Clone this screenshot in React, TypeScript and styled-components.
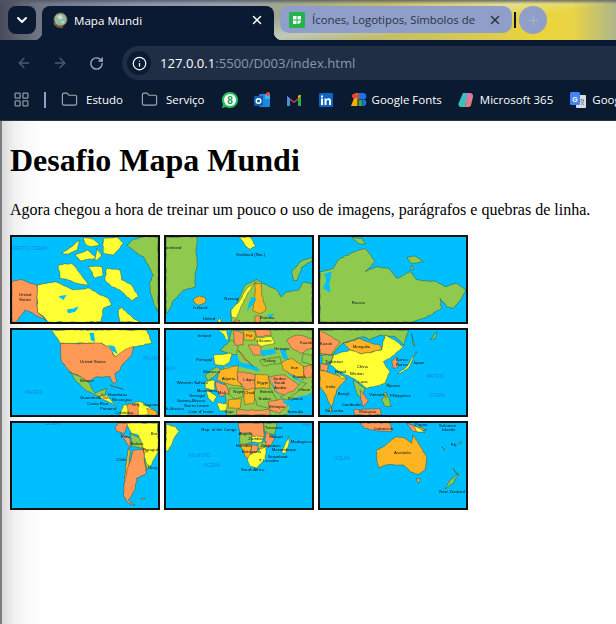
import React from "react";
import styled, { createGlobalStyle } from "styled-components";
import { ArrowLeft, ArrowRight, RotateCw, Info, X, ChevronDown, Folder, LayoutGrid, Plus } from "lucide-react";

const Global = createGlobalStyle`
  html, body { margin: 0; padding: 0; background: #fff; }
  body { width: 616px; height: 624px; overflow: hidden; font-family: "Liberation Serif", serif; }
`;

const NAVY = "#0a1a33";
const TAB = "#8f9fc9";

const Shell = styled.div`width: 616px; height: 624px; display: flex; flex-direction: column; overflow: hidden;`;
const TabStrip = styled.div`
  height: 40px; flex: none; display: flex; align-items: flex-start; padding: 6px 0 0 8px; box-sizing: border-box;
  background:
    linear-gradient(180deg, rgba(80,85,100,.8) 0, rgba(80,85,100,0) 4px),
    linear-gradient(172deg, transparent 45%, rgba(225,235,225,.5) 60%, transparent 72%),
    linear-gradient(90deg, #474b58 0, #6f7484 6%, #8b93ad 22%, #98a0ab 38%, #a3aa88 48%, #bcb96f 58%, #cfc55c 72%, #ecd53a 88%, #e8d445 93%, #aeb58c 100%);
`;
const MenuButton = styled.div`
  width: 28px; height: 28px; border-radius: 8px; background: ${NAVY}; color: #fff; display: flex; align-items: center; justify-content: center; flex: none;
`;
const ActiveTab = styled.div`
  position: relative; margin-left: 6px; width: 232px; height: 34px; flex: none; box-sizing: border-box; padding: 0 10px 6px 10px;
  background: ${NAVY}; border-radius: 8px 8px 0 0; color: #fff; display: flex; align-items: center;
  font: 11.6px "Open Sans", sans-serif;
  &::before, &::after { content: ""; position: absolute; bottom: 0; width: 8px; height: 8px; }
  &::before { left: -8px; background: radial-gradient(circle at 0 0, transparent 8px, ${NAVY} 8.5px); }
  &::after { right: -8px; background: radial-gradient(circle at 100% 0, transparent 8px, ${NAVY} 8.5px); }
`;
const InactiveTab = styled.div`
  margin-left: 6px; width: 232px; height: 27px; flex: none; box-sizing: border-box; padding: 0 10px 0 9px;
  background: ${TAB}; border-radius: 9px; color: #2d3444; display: flex; align-items: center;
  font: 11.4px "Open Sans", sans-serif;
`;
const TabTitle = styled.span<{ $gap: number }>`flex: 1; margin-left: ${(p) => p.$gap}px; white-space: nowrap; overflow: hidden;`;
const TabDivider = styled.div`width: 2px; height: 16px; margin: 6px 3px 0 2px; background: #0c1626; flex: none;`;
const NewTab = styled.div`width: 28px; height: 28px; border-radius: 50%; background: ${TAB}; color: #a3afd0; display: flex; align-items: center; justify-content: center; flex: none;`;

const Toolbar = styled.div`height: 40px; flex: none; background: ${NAVY}; display: flex; align-items: flex-end; box-sizing: border-box; color: #5e6a80;`;
const NavButton = styled.div<{ $color?: string }>`
  width: 36px; height: 34px; flex: none; display: flex; align-items: center; justify-content: center; color: ${(p) => p.$color || "#4d5a70"};
`;
const NavGroup = styled.div`display: flex; padding-left: 6px; width: 122px; box-sizing: border-box; flex: none; gap: 0;`;
const Omnibox = styled.div`
  flex: 1; height: 34px; background: #202e45; border-radius: 17px 0 0 17px; display: flex; align-items: center; padding-left: 5px;
  font: 13.1px "Open Sans", sans-serif; color: #8c96a8; white-space: nowrap;
`;
const InfoChip = styled.div`width: 24px; height: 24px; border-radius: 50%; background: ${NAVY}; color: #fff; display: flex; align-items: center; justify-content: center; margin-right: 9px; flex: none;`;
const Host = styled.span`color: #fff;`;

const Bookmarks = styled.div`
  height: 41px; flex: none; background: #0a1a30; border-bottom: 1px solid #2b3447; box-sizing: border-box; display: flex; align-items: center; padding: 0 0 1px 13px;
  color: #fff; font: 11.5px "Open Sans", sans-serif; white-space: nowrap; overflow: hidden;
`;
const Separator = styled.div`width: 2px; height: 16px; background: #8ea2c6; margin: 0 15px 0 14px; flex: none;`;
const BookmarkItem = styled.div<{ $gap?: number; $next?: number }>`
  display: flex; align-items: center; gap: ${(p) => p.$gap ?? 6}px; margin-right: ${(p) => p.$next ?? 16}px; flex: none;
  & > svg { flex: none; }
`;

const Page = styled.main`
  flex: 1; padding: 0 0 0 10px; display: flow-root;
  background: linear-gradient(90deg, #7d7d7d 0, #7d7d7d 2px, #d9d9d9 2px, #f0f0f0 14px, #fafafa 28px, #fff 44px);
`;
const Heading = styled.h1`font: bold 32px/37px "Liberation Serif", serif; margin: 21.44px 0; color: #000;`;
const Lead = styled.p`font: 16px/18px "Liberation Serif", serif; margin: 16px 0; color: #000;`;
const MapGrid = styled.div`display: grid; grid-template-columns: repeat(3, 150px); grid-auto-rows: 89px; gap: 4px;`;
const TileFrame = styled.svg`display: block; width: 150px; height: 89px; box-sizing: border-box; border: 2px solid #111; background: #00bfff; filter: blur(.3px);`;

const G = "#8fca4e", Y = "#ffff33", O = "#ff9955", A = "#ffb522", B = "#00bfff";
type Shape = [string, string];
type Label = [string, number, number, boolean?];
type Tile = { box: string; shapes: Shape[]; labels: Label[] };

/* Roughens the straight edges of a shape so that they read as coastlines. */
const coast = (points: string, seed: number) => {
  const pts = points.split(" ").map((p) => p.split(",").map(Number));
  let s = seed * 9301 + 49297;
  const rnd = () => { s = (s * 9301 + 49297) % 233280; return s / 233280 - 0.5; };
  const out: string[] = [];
  pts.forEach((p, i) => {
    const q = pts[(i + 1) % pts.length];
    const len = Math.hypot(q[0] - p[0], q[1] - p[1]);
    const steps = Math.max(1, Math.round(len / 9));
    for (let k = 0; k < steps; k++) {
      const t = k / steps;
      const amp = k === 0 ? 0 : 3.4;
      out.push(`${(p[0] + (q[0] - p[0]) * t + rnd() * amp).toFixed(1)},${(p[1] + (q[1] - p[1]) * t + rnd() * amp).toFixed(1)}`);
    }
  });
  return out.join(" ");
};

const tiles: Tile[] = [
  { box: "36 21 438 255", shapes: [
    [G, "380,45 400,28 430,21 474,21 474,245 462,225 452,190 448,160 460,135 445,105 430,80 405,65"],
    [Y, "112,165 165,155 200,170 220,180 270,175 300,195 325,205 335,225 310,235 303,276 145,276 125,255 112,245"],
    [Y, "355,240 365,232 395,260 420,276 360,276"],
    [Y, "320,115 360,120 365,150 395,165 415,200 395,212 360,180 335,170 315,150"],
    [Y, "175,105 215,100 240,130 265,165 230,160 205,150 180,145"],
    [Y, "310,25 350,22 370,40 340,75 310,70"],
    [Y, "250,22 280,28 300,45 272,50 255,40"], [Y, "185,70 215,50 240,30 232,60 205,72"],
    [Y, "265,110 305,110 310,135 285,145"],
    [Y, "225,75 262,60 290,85 240,92"], [Y, "290,55 305,78 285,92"],
    [O, "36,155 60,148 110,165 112,245 140,272 125,265 100,250 75,240 50,276 36,276"],
    [B, "175,200 200,195 190,210"], [B, "200,240 235,230 225,245 205,250"],
  ], labels: [["ARCTIC OCEAN", 37, 60, true], ["United", 57, 199], ["States", 57, 213]] },
  { box: "18 15 438 255", shapes: [
    [G, "18,15 112,15 108,60 112,95 105,130 105,165 70,175 40,205 25,240 18,245"],
    [A, "100,200 118,192 138,198 135,212 115,220 102,210"],
    [Y, "238,15 270,15 288,42 270,52 255,40"],
    [G, "456,155 430,150 415,175 380,180 365,195 345,170 310,155 290,142 255,160 240,195 225,225 213,235 215,270 456,270"],
    [G, "400,145 395,120 420,90 456,75 456,85 425,105 412,145"],
    [A, "285,155 305,155 305,190 318,235 300,245 278,235 285,205"],
    [Y, "213,235 240,205 260,170 290,148 275,165 260,190 245,220 230,258 215,255"],
    [B, "275,195 290,200 272,225 262,240 268,210"], [B, "320,250 345,245 330,258"],
    [Y, "172,270 178,258 185,270"], [O, "285,252 302,252 300,270 285,270"], [O, "225,264 240,266 235,270 225,270"],
  ], labels: [["eenland", 18, 52], ["Svalbard (Nor.)", 228, 73], ["Iceland", 100, 231], ["Norway", 193, 203], ["Estonia", 300, 260], ["United", 128, 264]] },
  { box: "240 21 438 255", shapes: [
    [G, "240,125 280,115 300,85 355,60 375,55 405,95 375,125 410,110 445,115 470,145 510,125 530,150 590,155 615,170 650,160 678,180 665,205 640,235 620,230 600,205 605,235 575,255 550,265 515,276 240,276"],
    [G, "500,82 525,78 550,95 515,100"], [G, "336,22 365,25 378,42 355,40"], [G, "515,105 522,118 510,120"],
    [B, "252,132 275,125 268,160 272,190 250,175 258,150"],
  ], labels: [["Russia", 335, 222]] },
  { box: "36 300 438 255", shapes: [
    [Y, "155,300 440,300 455,340 400,350 385,375 345,380 330,355 305,340 180,340"],
    [O, "180,340 305,340 330,355 345,380 385,355 400,350 395,375 370,400 360,420 345,430 350,455 340,460 330,440 290,440 265,455 240,440 210,425 185,395"],
    [G, "208,425 240,440 265,455 285,490 320,475 315,495 295,500 255,480 225,450"],
    [O, "330,465 370,478 345,472"], [Y, "295,500 320,495 350,535 335,520"], [O, "305,490 325,505 310,505"],
    [Y, "360,555 370,525 420,515 470,545 474,555"], [O, "380,525 415,520 415,555 385,555"], [A, "440,535 470,545 470,555 445,555"],
    [B, "268,310 282,308 285,335 272,330"], [B, "320,345 345,350 352,372 335,362"],
  ], labels: [["United States", 240, 399], ["Mexico", 240, 455], ["PACIFIC", 75, 491, true], ["ATLANT", 428, 389, true], ["Guatemala", 240, 508], ["Honduras", 325, 499], ["Nicaragua", 336, 513], ["Costa Rica", 262, 526], ["Panama", 300, 539], ["Colombia", 345, 552], ["Guyana", 430, 527], ["Ven.", 395, 529]] },
  { box: "18 15 438 255", shapes: [
    [G, "215,15 456,15 456,270 200,270 190,120"],
    [G, "150,30 168,20 170,38 155,42"], [Y, "175,15 200,15 205,45 180,60 195,35"],
    [B, "165,60 215,65 230,85 240,110 290,125 300,140 235,125 195,125 140,145 135,270 18,270 18,15 175,15 205,50 180,75"],
    [G, "180,75 215,45 235,65 228,90 205,85"],
    [Y, "160,90 215,85 210,110 190,122 165,118"],
    [O, "220,15 250,25 250,60 225,60"], [A, "250,15 285,20 285,45 252,45"], [O, "285,15 330,15 335,30 290,35"],
    [Y, "285,40 335,35 345,55 300,65"], [O, "235,75 265,110 280,125 255,105"], [O, "265,60 300,60 305,90 280,90"],
    [B, "300,78 340,72 350,85 310,95"], [G, "300,105 360,95 365,115 310,122"], [O, "380,45 410,30 456,40 456,70 420,85 395,70"],
    [B, "360,75 375,70 385,105 368,100"], [A, "365,110 395,100 430,125 430,165 400,150 370,135"], [G, "430,85 456,90 456,120 425,110"], [O, "430,125 456,120 456,155 435,160"],
    [G, "135,150 170,125 185,135 145,170"], [A, "180,135 235,120 232,165 245,185 215,180 170,165"], [O, "232,140 285,148 285,195 260,195 232,165"],
    [A, "285,148 325,150 330,190 285,190"], [G, "285,190 330,190 350,225 325,250 290,240 282,210"], [A, "250,195 285,190 282,235 255,240"],
    [G, "208,190 250,190 250,215 225,222 205,208"], [O, "165,170 200,180 208,205 180,215 170,195"], [Y, "135,170 165,165 165,195 135,190"],
    [Y, "140,195 170,215 160,235 145,220"], [A, "205,225 245,222 240,250 205,250"], [O, "325,230 365,222 385,240 360,265 330,255"],
    [O, "230,255 330,255 330,270 230,270"], [Y, "170,235 200,235 200,258 180,258"], [O, "325,155 375,150 420,185 385,215 345,200"], [G, "360,215 405,195 425,170 440,175 420,195 380,225"],
    [B, "330,150 345,195 375,230 385,232 360,215 340,185"], [B, "375,135 405,165 430,170 400,155"], [B, "365,230 456,205 456,270 380,270 390,245"],
  ], labels: [["Ireland", 113, 35], ["Portugal", 108, 107], ["Morocco", 130, 143], ["Western Sahara", 50, 177], ["Mauritania", 110, 202], ["Mali", 173, 207], ["Senegal", 88, 215], ["Guinea-Bissau", 50, 232], ["Sierra Leone", 72, 246], ["h-Guiana", 18, 256], ["Cote d' Ivoire", 85, 265], ["Togo", 193, 265], ["Algeria", 185, 165], ["Libya", 250, 167], ["Egypt", 292, 178], ["Niger", 220, 203], ["Chad", 252, 207], ["Sudan", 295, 225], ["Eritrea", 300, 203], ["Saudi", 342, 177], ["Arabia", 342, 191], ["Jordan", 338, 164], ["Iran", 392, 133], ["Kuwait", 398, 160], ["Turkey", 308, 112], ["Djibouti", 385, 225], ["Oman", 415, 198], ["Somalia", 382, 264], ["Ethiopia", 328, 248], ["Pol", 258, 37], ["Ukraine", 290, 50], ["Georgia", 342, 76], ["Kazak", 420, 58], ["C", 18, 105, true], ["EAN", 18, 135, true]] },
  { box: "240 300 438 255", shapes: [
    [G, "240,300 505,300 492,345 465,320 420,315 390,330 370,320 310,338 275,375 240,375"],
    [O, "240,300 300,335 275,375 240,370"],
    [A, "310,340 360,325 395,340 420,345 425,360 365,372 330,360"],
    [Y, "280,375 330,360 365,372 425,360 435,315 470,335 490,350 450,385 430,395 450,425 435,460 380,475 340,445 300,425 270,405"],
    [G, "245,375 280,375 270,400 245,405"], [O, "240,400 265,405 262,425 240,420"],
    [A, "240,420 290,435 320,445 290,480 275,535 255,490 240,470"],
    [Y, "285,425 320,445 305,445"], [O, "455,395 470,380 475,410 460,415"],
    [Y, "472,430 500,410 530,365 515,395 505,415 480,430"], [G, "340,450 375,475 365,510 350,490"],
    [O, "360,480 385,510 370,530 362,505"], [G, "425,510 440,490 455,530 435,530"], [O, "340,540 420,535 425,555 345,555"],
    [A, "440,462 445,460 440,470"], [A, "430,490 440,488 438,505"], [G, "515,310 525,350 520,345"], [G, "570,330 590,305 585,325"], [A, "265,535 275,535 272,547"],
  ], labels: [["Mongolia", 338, 353], ["China", 350, 415], ["Korea", 468, 393], ["Korea", 468, 408], ["Japan", 518, 401], ["Taiwan", 440, 470], ["Philippines", 450, 502], ["Vietnam", 387, 499], ["Laos", 355, 458], ["Bhutan", 330, 434], ["Nepal", 285, 430], ["India", 258, 474], ["Sri Lanka", 255, 545], ["Malaysia", 358, 549], ["Cambodia", 305, 528], ["Bangl.", 293, 494], ["Kazak", 240, 346], ["Tajikistan", 255, 400], ["PACIFIC", 560, 443, true], ["OCEAN", 566, 500, true]] },
  { box: "36 24 438 255", shapes: [
    [O, "345,35 355,24 385,24 375,55 350,50"],
    [Y, "380,24 474,24 474,110 455,150 440,160 430,105 415,60 395,55"],
    [O, "360,55 390,70 390,100 375,75"], [G, "390,55 420,70 430,100 395,95"], [A, "425,97 445,110 430,115"],
    [A, "385,100 392,110 380,190 374,190"],
    [O, "400,105 430,105 440,175 410,190 405,225 385,255 405,272 385,265 370,240 375,190"],
    [G, "435,140 450,155 440,165"], [A, "423,250 435,250 430,255"],
  ], labels: [["OCEAN", 135, 29, true], ["Bra", 452, 60], ["Bolivia", 392, 89], ["Peru", 362, 68], ["Paraguay", 428, 108], ["Chile", 349, 138], ["Urug", 444, 161]] },
  { box: "18 15 438 255", shapes: [
    [Y, "18,18 45,25 57,40 40,65 25,98 18,100"],
    [O, "235,15 310,15 315,60 265,55 240,45"], [G, "310,15 350,15 345,50 315,45"],
    [G, "238,45 275,45 275,75 240,80"], [Y, "275,55 310,55 305,75 275,72"], [O, "318,40 345,60 325,90 315,80"], [G, "295,75 320,72 310,95 290,90"],
    [A, "240,80 275,80 270,125 255,115"], [O, "275,80 295,85 290,105 270,105"], [Y, "270,110 320,85 315,125 290,150 270,145 262,125"],
    [Y, "365,105 385,55 388,70 378,105"], [O, "298,124 304,124 301,130"],
  ], labels: [["IND", 428, 24, true], ["Rep. of the Congo", 124, 39], ["Angola", 236, 52], ["Zambia", 265, 66], ["Tanzania", 315, 33], ["Namibia", 227, 87], ["Zimbabwe", 302, 86], ["Botswana", 246, 104], ["Malawi", 328, 60], ["Mozambique", 335, 100], ["Swaziland", 323, 120], ["Lesotho", 310, 133], ["South Africa", 243, 158], ["Madagascar", 392, 75], ["ATLANTIC", 84, 117, true], ["OCEAN", 131, 148, true]] },
  { box: "240 24 438 255", shapes: [
    [A, "408,105 430,95 470,65 495,70 515,85 518,60 560,125 555,165 535,178 510,170 490,150 450,148 415,158"],
    [A, "528,190 542,192 535,205"], [G, "615,222 630,195 655,175 640,205"], [G, "640,160 655,180 645,172"],
    [O, "360,24 450,24 455,50 400,45 375,40"], [O, "500,24 560,45 520,50"], [Y, "520,30 555,52 530,50"], [G, "655,85 665,80 660,88"], [O, "605,95 615,105 610,103"],
  ], labels: [["Indonesia", 403, 44], ["Papua", 525, 32], ["Solomon", 597, 36], ["Islands", 605, 49], ["Fiji", 633, 93], ["Australia", 462, 118], ["OCEAN", 280, 136, true], ["New Zealand", 598, 234]] },
];

const MapTile = ({ tile }: { tile: Tile }) => (
  <TileFrame viewBox={tile.box} preserveAspectRatio="none">
    {tile.shapes.map(([fill, points], i) => (
      <polygon key={i} points={coast(points, i + 1)} fill={fill} stroke={fill === B ? "none" : "#2a3a25"} strokeWidth="1.2" strokeLinejoin="round" />
    ))}
    {tile.labels.map(([text, x, y, ocean], i) => (
      <text key={i} x={x} y={y} fontFamily="'Liberation Sans', sans-serif" fontSize={ocean ? 14 : 13} fill={ocean ? "#0d84e6" : "#08141c"}>{text}</text>
    ))}
  </TileFrame>
);

const Globe = () => (
  <svg width="16" height="16" viewBox="0 0 16 16">
    <circle cx="8.5" cy="7.5" r="6.5" fill="#8fb9a8" stroke="#7a6a3a" strokeWidth="1" />
    <path d="M5 4l4-1 2 3-3 2zM9 9l3 0-1 3z" fill="#cfe0c0" />
    <path d="M2 11c1 3 5 4.500 9 4" stroke="#a0672a" strokeWidth="1.500" fill="none" />
  </svg>
);
const Sheet = () => (
  <svg width="16" height="16" viewBox="0 0 16 16">
    <rect width="16" height="16" rx="2" fill="#22b34b" />
    <path d="M4 4h3.500v3.500H4zM8.500 4H12v3.500H8.500zM4 8.500h3.500V12H4zM8.500 8.500H12c0 2-1.500 3.500-3.500 3.500z" fill="#fff" />
  </svg>
);
const WhatsApp = () => (
  <svg width="16" height="16" viewBox="0 0 16 16">
    <path d="M8 0a8 8 0 0 1 0 16 8 8 0 0 1-4-1L0 16l1.100-3.800A8 8 0 0 1 8 0z" fill="#22c35e" />
    <circle cx="8" cy="8" r="6" fill="#fff" />
    <text x="8" y="11.500" textAnchor="middle" fontFamily="'Liberation Sans', sans-serif" fontWeight="bold" fontSize="10" fill="#179c48">8</text>
  </svg>
);
const Outlook = () => (
  <svg width="16" height="16" viewBox="0 0 16 16">
    <rect x="5" y="2" width="11" height="13" rx="1" fill="#1e88d8" />
    <rect x="11" y="2" width="5" height="5" fill="#37b6f0" />
    <circle cx="14" cy="2" r="2" fill="#e5484d" />
    <rect y="4" width="9" height="10" rx="1" fill="#0f5fb0" />
    <circle cx="4.500" cy="9" r="2.300" fill="none" stroke="#fff" strokeWidth="1.400" />
  </svg>
);
const Gmail = () => (
  <svg width="16" height="14" viewBox="0 0 16 14">
    <path d="M1 13V3l7 5.500L15 3v10h-3V7L8 10 4 7v6z" fill="#e8453c" />
    <path d="M1 13V3l3 2.500V13z" fill="#4a90d9" /><path d="M15 13V3l-3 2.500V13z" fill="#34a853" />
    <path d="M12 5.500L15 3l-1-1.500-2 1.500z" fill="#fbbc04" />
  </svg>
);
const LinkedIn = () => (
  <svg width="14" height="14" viewBox="0 0 14 14">
    <rect width="14" height="14" rx="1" fill="#0a66c2" />
    <path d="M2 5.500h2V12H2zM2 2.500h2v2H2zM5.500 5.500h2v1c.5-.8 1.200-1.200 2.200-1.200 1.600 0 2.300 1 2.300 2.800V12h-2V8.400c0-.9-.3-1.400-1-1.400s-1.500.6-1.500 1.500V12h-2z" fill="#fff" />
  </svg>
);
const GoogleFonts = () => (
  <svg width="16" height="13" viewBox="0 0 16 13">
    <path d="M0 13L5 0h1.500v13z" fill="#f9ab00" />
    <path d="M6.500 0H8v6.500H6.500z" fill="#ea4335" /><circle cx="3.500" cy="3" r="2.500" fill="#ea4335" />
    <path d="M7.500 13V7h4v6z" fill="#34a853" />
    <path d="M8 0h4a3 3 0 0 1 0 6.500H8z" fill="#1a73e8" /><path d="M12 6.500a3.200 3.200 0 0 1 0 6.500z" fill="#1a73e8" />
  </svg>
);
const Copilot = () => (
  <svg width="16" height="16" viewBox="0 0 16 16">
    <defs>
      <linearGradient id="cpA" x1="0" y1="0" x2="1" y2="1"><stop offset="0" stopColor="#2bb6f0" /><stop offset="1" stopColor="#3fd08a" /></linearGradient>
      <linearGradient id="cpB" x1="0" y1="0" x2="1" y2="1"><stop offset="0" stopColor="#c86be8" /><stop offset="1" stopColor="#f08a4a" /></linearGradient>
    </defs>
    <path d="M5 1h5L7 15H3C1 15 0 13 .6 11z" fill="url(#cpA)" />
    <path d="M9 1h3c2 0 3.500 2 3 4l-2 8c-.4 1.500-1.500 2-3 2H7z" fill="url(#cpB)" />
  </svg>
);
const Translate = () => (
  <svg width="16" height="16" viewBox="0 0 16 16">
    <rect x="6" y="3" width="10" height="13" rx="1" fill="#d9dde3" />
    <rect width="10" height="13" rx="1.500" fill="#4285f4" />
    <text x="5" y="9.500" textAnchor="middle" fontFamily="'Liberation Sans', sans-serif" fontWeight="bold" fontSize="7" fill="#fff">G</text>
    <path d="M10 8h4M12 7v1M11 13c1.500-1 2.500-2.500 2.500-5M11 9c.5 1.500 1.500 3 3 4" stroke="#6c7480" strokeWidth=".8" fill="none" />
  </svg>
);

export default function App() {
  return (
    <Shell>
      <Global />
      <TabStrip>
        <MenuButton><ChevronDown size={16} strokeWidth={3} /></MenuButton>
        <ActiveTab>
          <Globe />
          <TabTitle $gap={6}>Mapa Mundi</TabTitle>
          <X size={14} strokeWidth={2.5} />
        </ActiveTab>
        <InactiveTab>
          <Sheet />
          <TabTitle $gap={7}>Ícones, Logotipos, Símbolos de</TabTitle>
          <X size={14} strokeWidth={2.5} />
        </InactiveTab>
        <TabDivider />
        <NewTab><Plus size={15} /></NewTab>
      </TabStrip>
      <Toolbar>
        <NavGroup>
          <NavButton><ArrowLeft size={16} /></NavButton>
          <NavButton><ArrowRight size={16} /></NavButton>
          <NavButton $color="#a4acba"><RotateCw size={15} strokeWidth={2.2} /></NavButton>
        </NavGroup>
        <Omnibox>
          <InfoChip><Info size={15} strokeWidth={2} /></InfoChip>
          <Host>127.0.0.1</Host>:5500/D003/index.html
        </Omnibox>
      </Toolbar>
      <Bookmarks>
        <LayoutGrid size={17} color="#8e95a3" strokeWidth={1.8} style={{ flex: "none" }} />
        <Separator />
        <BookmarkItem $gap={8} $next={18}><Folder size={17} color="#a3a7ad" strokeWidth={1.6} />Estudo</BookmarkItem>
        <BookmarkItem $gap={8} $next={17}><Folder size={17} color="#a3a7ad" strokeWidth={1.6} />Serviço</BookmarkItem>
        <BookmarkItem $next={16}><WhatsApp /></BookmarkItem>
        <BookmarkItem $next={16}><Outlook /></BookmarkItem>
        <BookmarkItem $next={17}><Gmail /></BookmarkItem>
        <BookmarkItem $next={18}><LinkedIn /></BookmarkItem>
        <BookmarkItem $gap={5} $next={16}><GoogleFonts />Google Fonts</BookmarkItem>
        <BookmarkItem $next={17}><Copilot />Microsoft 365</BookmarkItem>
        <BookmarkItem><Translate />Goog</BookmarkItem>
      </Bookmarks>
      <Page>
        <Heading>Desafio Mapa Mundi</Heading>
        <Lead>Agora chegou a hora de treinar um pouco o uso de imagens, parágrafos e quebras de linha.</Lead>
        <MapGrid>
          {tiles.map((tile, i) => <MapTile key={i} tile={tile} />)}
        </MapGrid>
      </Page>
    </Shell>
  );
}
